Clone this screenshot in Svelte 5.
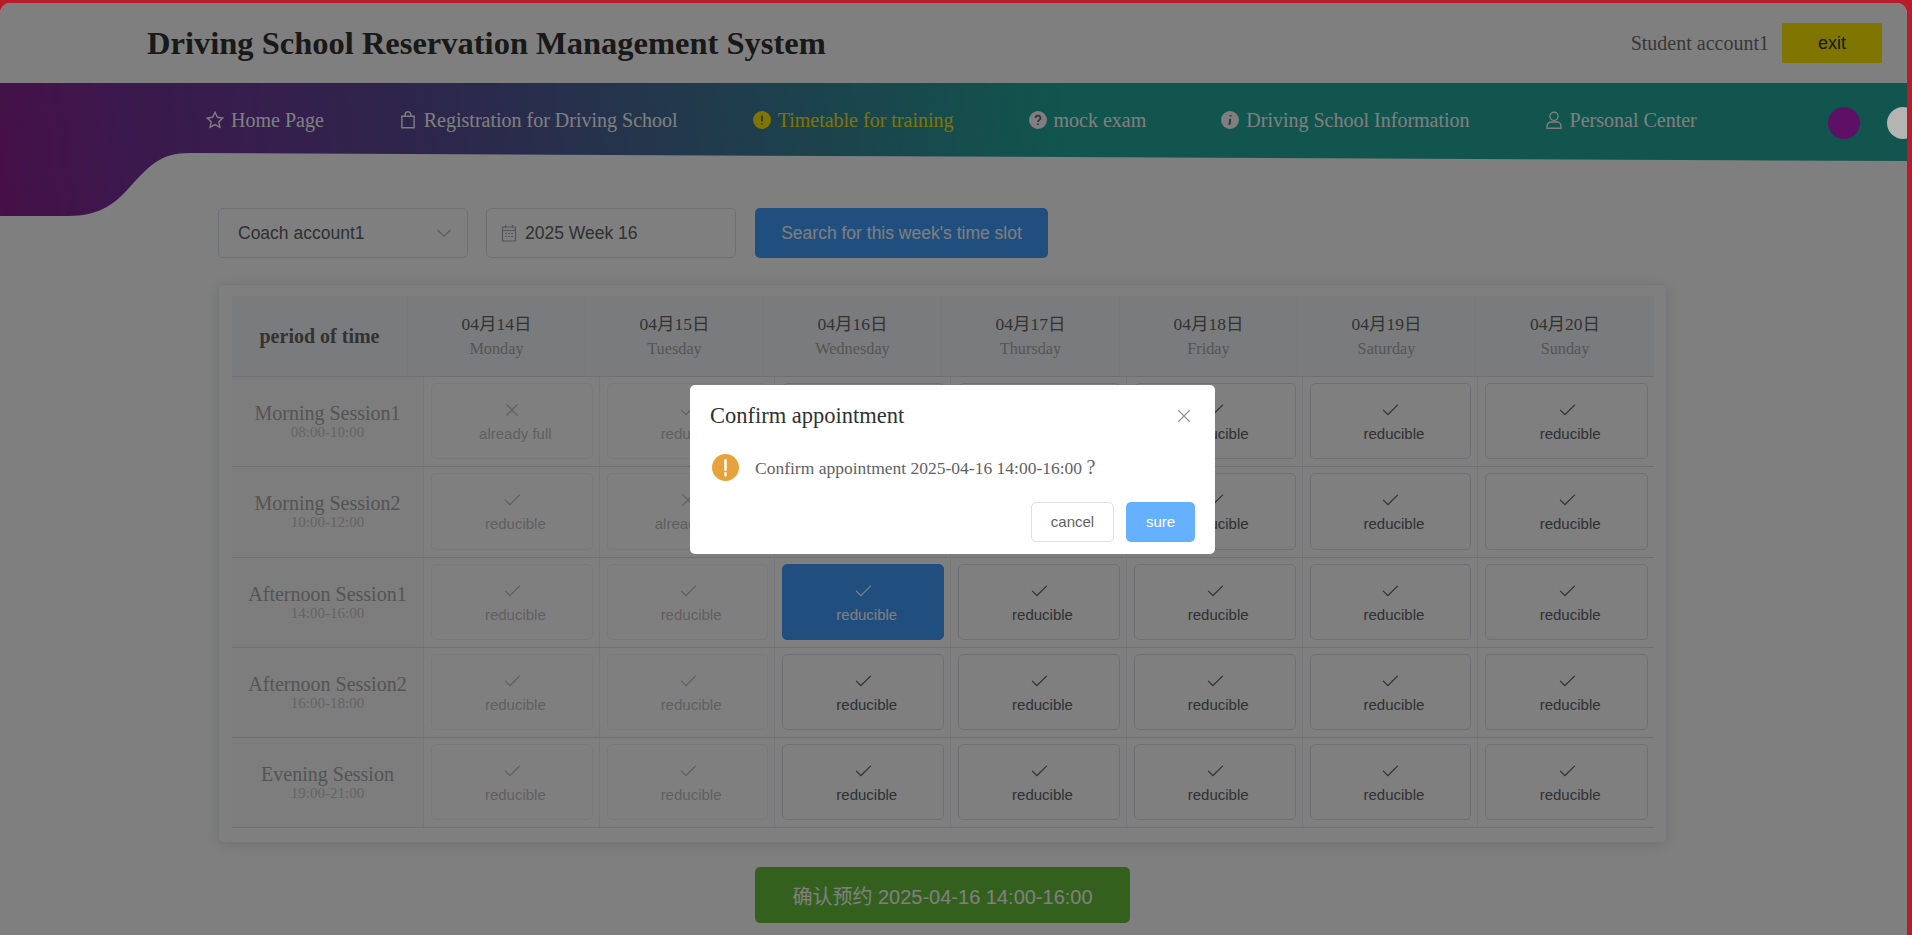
<script>
    const days = [
        { date: "04月14日", week: "Monday" },
        { date: "04月15日", week: "Tuesday" },
        { date: "04月16日", week: "Wednesday" },
        { date: "04月17日", week: "Thursday" },
        { date: "04月18日", week: "Friday" },
        { date: "04月19日", week: "Saturday" },
        { date: "04月20日", week: "Sunday" },
    ];

    const sessions = [
        { name: "Morning Session1", time: "08:00-10:00" },
        { name: "Morning Session2", time: "10:00-12:00" },
        { name: "Afternoon Session1", time: "14:00-16:00" },
        { name: "Afternoon Session2", time: "16:00-18:00" },
        { name: "Evening Session", time: "19:00-21:00" },
    ];

    const menu = [
        { label: "Home Page", icon: "star" },
        { label: "Registration for Driving School", icon: "bag" },
        { label: "Timetable for training", icon: "warn", active: true },
        { label: "mock exam", icon: "question" },
        { label: "Driving School Information", icon: "info" },
        { label: "Personal Center", icon: "user" },
    ];

    // row index, day index
    function isFull(r, d) {
        return (r === 0 && d === 0) || (r === 1 && d === 1);
    }
    function isSelected(r, d) {
        return r === 2 && d === 2;
    }
</script>

<div class="page">
    <header class="top">
        <h1>Driving School Reservation Management System</h1>
        <div class="account">
            <span>Student account1</span>
            <button class="exit">exit</button>
        </div>
    </header>

    <nav class="nav">
        <svg class="navBg" width="1912" height="140" viewBox="0 0 1912 140">
            <defs>
                <linearGradient id="navGrad" gradientUnits="userSpaceOnUse" x1="0" y1="133" x2="1060" y2="0">
                    <stop offset="0" stop-color="#8c2090" />
                    <stop offset="0.12" stop-color="#78309c" />
                    <stop offset="0.42" stop-color="#5a4e98" />
                    <stop offset="1" stop-color="#22aa9c" />
                </linearGradient>
            </defs>
            <path d="M0 0H1912V78L190 70C160 70 150 82 128 106C108 128 92 133 64 133H0Z" fill="url(#navGrad)" />
        </svg>
        {#each menu as item}
            <a class="navItem" class:active={item.active} href="#top">
                <svg class="navIcon" viewBox="1 1 22 22">
                    {#if item.icon === "star"}
                        <path d="M12 2.5l2.9 6.2 6.6.9-4.8 4.6 1.2 6.6-5.9-3.2-5.9 3.2 1.2-6.6-4.8-4.6 6.6-.9z" class="line" />
                    {:else if item.icon === "bag"}
                        <path d="M4.5 7.5h15v14h-15zM8.5 7.5V5.5a3.5 3.5 0 0 1 7 0v2" class="line" />
                    {:else if item.icon === "warn"}
                        <circle cx="12" cy="12" r="11" class="fill" />
                        <path d="M12 6.5v7M12 16v1.6" class="cut" />
                    {:else if item.icon === "question"}
                        <circle cx="12" cy="12" r="11" class="fill" />
                        <path d="M9 9.5a3 3 0 1 1 4.6 2.5c-1 .7-1.6 1.2-1.6 2.3M12 16.4V18" class="cut" />
                    {:else if item.icon === "info"}
                        <circle cx="12" cy="12" r="11" class="fill" />
                        <path d="M12.8 6v1.8M12.4 10.5l-1.2 7.5" class="cut" />
                    {:else}
                        <circle cx="12" cy="7.5" r="5" class="line" />
                        <path d="M3.5 22v-2.5a5 5 0 0 1 5-5h7a5 5 0 0 1 5 5V22z" class="line" />
                    {/if}
                </svg>
                <span>{item.label}</span>
            </a>
        {/each}
    </nav>

    <main class="main">
        <div class="filters">
            <div class="field select">
                <span>Coach account1</span>
                <svg class="chevron" viewBox="0 0 1024 1024">
                    <path d="M831.872 340.864 512 652.672 192.128 340.864a30.592 30.592 0 0 0-42.752 0 29.12 29.12 0 0 0 0 41.6L489.664 714.24a32 32 0 0 0 44.672 0l340.288-331.712a29.12 29.12 0 0 0 0-41.728 30.592 30.592 0 0 0-42.752 0z" />
                </svg>
            </div>
            <div class="field date">
                <svg class="calendar" viewBox="0 0 16 18">
                    <path d="M1.5 3h13v14h-13zM1.5 6.5h13M4.5 1v3M11.5 1v3M4 9.5h2M7 9.5h2M10 9.5h2M4 12.5h2M7 12.5h2M10 12.5h2" />
                </svg>
                <span>2025 Week 16</span>
            </div>
            <button class="search">Search for this week's time slot</button>
        </div>

        <section class="card">
            <div class="headRow">
                <div class="headCell first">period of time</div>
                {#each days as day}
                    <div class="headCell">
                        <span class="dayDate">{day.date}</span>
                        <span class="dayName">{day.week}</span>
                    </div>
                {/each}
            </div>

            {#each sessions as session, r}
                <div class="row">
                    <div class="label">
                        <span class="labelName">{session.name}</span>
                        <span class="labelTime">{session.time}</span>
                    </div>
                    {#each days as day, d}
                        <div class="cell">
                            <div class="slot" class:past={d < 2} class:selected={isSelected(r, d)}>
                                <svg class="slotIcon" viewBox="0 0 1024 1024">
                                    {#if isFull(r, d)}
                                        <path d="M764.288 214.592 512 466.88 259.712 214.592a31.936 31.936 0 0 0-45.12 45.12L466.752 512 214.528 764.224a31.936 31.936 0 1 0 45.12 45.184L512 557.184l252.288 252.288a31.936 31.936 0 0 0 45.12-45.12L557.12 512.064l252.288-252.352a31.936 31.936 0 1 0-45.12-45.184z" />
                                    {:else}
                                        <path d="M406.656 706.944 195.84 496.256a32 32 0 1 0-45.248 45.248l256 256 512-512a32 32 0 1 0-45.248-45.248L406.592 706.944z" />
                                    {/if}
                                </svg>
                                <span class="slotText">{isFull(r, d) ? "already full" : "reducible"}</span>
                            </div>
                        </div>
                    {/each}
                </div>
            {/each}
        </section>

        <div class="confirmWrap">
            <button class="confirm">确认预约 2025-04-16 14:00-16:00</button>
        </div>
    </main>

    <div class="overlay">
        <span class="dot purple"></span>
        <span class="dot white"></span>
        <div class="dialog">
            <div class="dialogHead">
                <span class="dialogTitle">Confirm appointment</span>
                <svg class="close" viewBox="0 0 1024 1024">
                    <path d="M764.288 214.592 512 466.88 259.712 214.592a31.936 31.936 0 0 0-45.12 45.12L466.752 512 214.528 764.224a31.936 31.936 0 1 0 45.12 45.184L512 557.184l252.288 252.288a31.936 31.936 0 0 0 45.12-45.12L557.12 512.064l252.288-252.352a31.936 31.936 0 1 0-45.12-45.184z" />
                </svg>
            </div>
            <div class="dialogBody">
                <svg class="warnIcon" viewBox="0 0 24 24">
                    <circle cx="12" cy="12" r="12" fill="#e6a23c" />
                    <path d="M12 5.5v8.5M12 17v1.8" stroke="#fff" stroke-width="2.2" stroke-linecap="round" />
                </svg>
                <p>Confirm appointment 2025-04-16 14:00-16:00 <span class="mark">?</span></p>
            </div>
            <div class="dialogFoot">
                <button class="cancel">cancel</button>
                <button class="sure">sure</button>
            </div>
        </div>
    </div>
</div>

<style>
    :global(body) {
        margin: 0;
        overflow: hidden;
        background: #fff;
    }

    .page {
        height: 935px;
        position: relative;
        overflow: hidden;
        font-family: "Liberation Serif", "Noto Sans CJK SC", serif;
        color: #303133;
    }

    button {
        font-family: "Liberation Sans", "Noto Sans CJK SC", sans-serif;
        border: none;
        cursor: pointer;
    }

    .top {
        height: 83px;
        box-sizing: border-box;
        padding: 3px 30px 0 147px;
        display: flex;
        align-items: center;
        justify-content: space-between;
    }

    .top h1 {
        margin: 0;
        font-size: 32.5px;
        font-weight: bold;
        color: #333;
    }

    .account {
        display: flex;
        align-items: center;
        gap: 13px;
        font-size: 20px;
        color: #707070;
    }

    .exit {
        width: 100px;
        height: 40px;
        background: #ffea00;
        color: #333;
        font-size: 18px;
        border-radius: 2px;
    }

    .nav {
        position: relative;
        height: 74px;
        padding-left: 206px;
        display: flex;
        align-items: center;
        gap: 75px;
    }

    .navBg {
        position: absolute;
        left: 0;
        top: 0;
        z-index: 0;
    }

    .navItem {
        position: relative;
        display: flex;
        align-items: center;
        gap: 7px;
        font-size: 20px;
        color: #fff;
        text-decoration: none;
        white-space: nowrap;
    }

    .navItem.active {
        color: #ffea00;
    }

    .navIcon {
        width: 18px;
        height: 18px;
    }

    .line {
        fill: none;
        stroke: currentColor;
        stroke-width: 1.7;
    }

    .fill {
        fill: currentColor;
    }

    .cut {
        fill: none;
        stroke: #707070;
        stroke-width: 2.4;
    }

    .main {
        position: relative;
        padding: 51px 0 0 218px;
        width: 1449px;
    }

    .filters {
        display: flex;
        gap: 18px;
        height: 50px;
        font-family: "Liberation Sans", "Noto Sans CJK SC", sans-serif;
    }

    .field {
        width: 250px;
        box-sizing: border-box;
        border: 1px solid #dcdfe6;
        border-radius: 5px;
        display: flex;
        align-items: center;
        font-size: 17.5px;
        color: #606266;
    }

    .select {
        justify-content: space-between;
        padding: 0 14px 0 19px;
    }

    .chevron {
        width: 18px;
        height: 18px;
        fill: #a8abb2;
    }

    .date {
        padding-left: 14px;
        gap: 8px;
    }

    .calendar {
        width: 16px;
        height: 18px;
        fill: none;
        stroke: #a8abb2;
        stroke-width: 1.2;
    }

    .search {
        width: 293px;
        margin-left: 1px;
        background: #409eff;
        color: #fff;
        font-size: 17.5px;
        border-radius: 5px;
    }

    .card {
        margin-top: 26px;
        padding: 11px 12px 14px 13px;
        background: #fff;
        border: 1px solid #ebeef5;
        border-radius: 5px;
        box-sizing: border-box;
        box-shadow: 0 2px 15px rgba(0, 0, 0, 0.12);
    }

    .headRow {
        display: grid;
        grid-template-columns: 176px repeat(7, 1fr);
        height: 81px;
        background: #f5f7fa;
        border-bottom: 1px solid #dcdfe6;
        box-sizing: border-box;
    }

    .headCell {
        display: flex;
        flex-direction: column;
        align-items: center;
        justify-content: center;
        gap: 4px;
        border-right: 1px solid #ebeef5;
    }

    .headCell:last-child {
        border-right: none;
    }

    .first {
        font-size: 20px;
        font-weight: bold;
        color: #666;
    }

    .dayDate {
        font-size: 17.5px;
        color: #666;
        line-height: 22px;
    }

    .dayName {
        font-size: 16.25px;
        color: #aaa;
        line-height: 20px;
    }

    .row {
        display: grid;
        grid-template-columns: 192px repeat(7, 1fr);
        height: 90.3px;
        box-sizing: border-box;
        border-bottom: 1px solid #dcdfe6;
    }

    .label {
        display: flex;
        flex-direction: column;
        align-items: center;
        justify-content: center;
        background: #fafafa;
        border-right: 1px solid #ebeef5;
    }

    .labelName {
        font-size: 20px;
        line-height: 22px;
        color: #a8a8a8;
    }

    .labelTime {
        font-size: 15px;
        line-height: 17px;
        color: #c8c8c8;
    }

    .cell {
        padding: 6px 6px 7px 7px;
        border-right: 1px solid #ebeef5;
    }

    .cell:last-child {
        border-right: none;
    }

    .slot {
        height: 100%;
        box-sizing: border-box;
        border: 1px solid #dcdfe6;
        border-radius: 5px;
        display: flex;
        flex-direction: column;
        align-items: center;
        justify-content: center;
        gap: 5px;
        color: #606266;
        font-family: "Liberation Sans", sans-serif;
        font-size: 15px;
    }

    .slot.past {
        opacity: 0.4;
    }

    .slot.selected {
        background: #409eff;
        border-color: #409eff;
        color: #fff;
    }

    .slotIcon {
        width: 20px;
        height: 20px;
        fill: currentColor;
    }

    .slotText {
        padding-left: 7px;
    }

    .confirmWrap {
        display: flex;
        margin-top: 24px;
        padding-left: 537px;
    }

    .confirm {
        width: 375px;
        height: 56px;
        background: #67c23a;
        color: #fff;
        font-size: 20px;
        border-radius: 5px;
    }

    /* overlay also draws the red window frame round its own box */
    .overlay {
        position: absolute;
        inset: 3px 5px 0 0;
        background: rgba(0, 0, 0, 0.5);
        border-radius: 10px 10px 0 0;
        box-shadow: 0 0 0 40px #b71c2c;
        display: flex;
        align-items: center;
        justify-content: center;
        overflow: hidden;
    }

    .dot {
        position: absolute;
        top: 104px;
        width: 32px;
        height: 32px;
        border-radius: 50%;
    }

    .purple {
        right: 47px;
        background: #5f0f66;
    }

    .white {
        right: -12px;
        background: #b4b4b2;
    }

    .dialog {
        width: 525px;
        height: 169px;
        margin-right: 2px;
        box-sizing: border-box;
        background: #fff;
        border-radius: 5px;
        padding: 0 20px;
        display: flex;
        flex-direction: column;
    }

    .dialogHead {
        display: flex;
        align-items: center;
        justify-content: space-between;
        height: 50px;
        padding-top: 6px;
    }

    .dialogTitle {
        font-size: 22.5px;
        color: #303133;
    }

    .close {
        width: 20px;
        height: 20px;
        fill: #909399;
        margin-right: 1px;
    }

    .dialogBody {
        display: flex;
        align-items: center;
        gap: 16px;
        height: 46px;
        padding-left: 2px;
        margin-top: 4px;
    }

    .warnIcon {
        width: 27px;
        height: 27px;
    }

    .dialogBody p {
        margin: 0;
        font-size: 17.5px;
        color: #606266;
    }

    .mark {
        font-size: 20px;
    }

    .dialogFoot {
        display: flex;
        justify-content: flex-end;
        gap: 12px;
        margin-top: 11px;
    }

    .dialogFoot button {
        height: 40px;
        border-radius: 5px;
        font-size: 15px;
    }

    .cancel {
        width: 83px;
        background: #fff;
        border: 1px solid #dcdfe6;
        color: #606266;
    }

    .sure {
        width: 69px;
        background: #66b1ff;
        color: #fff;
    }
</style>
